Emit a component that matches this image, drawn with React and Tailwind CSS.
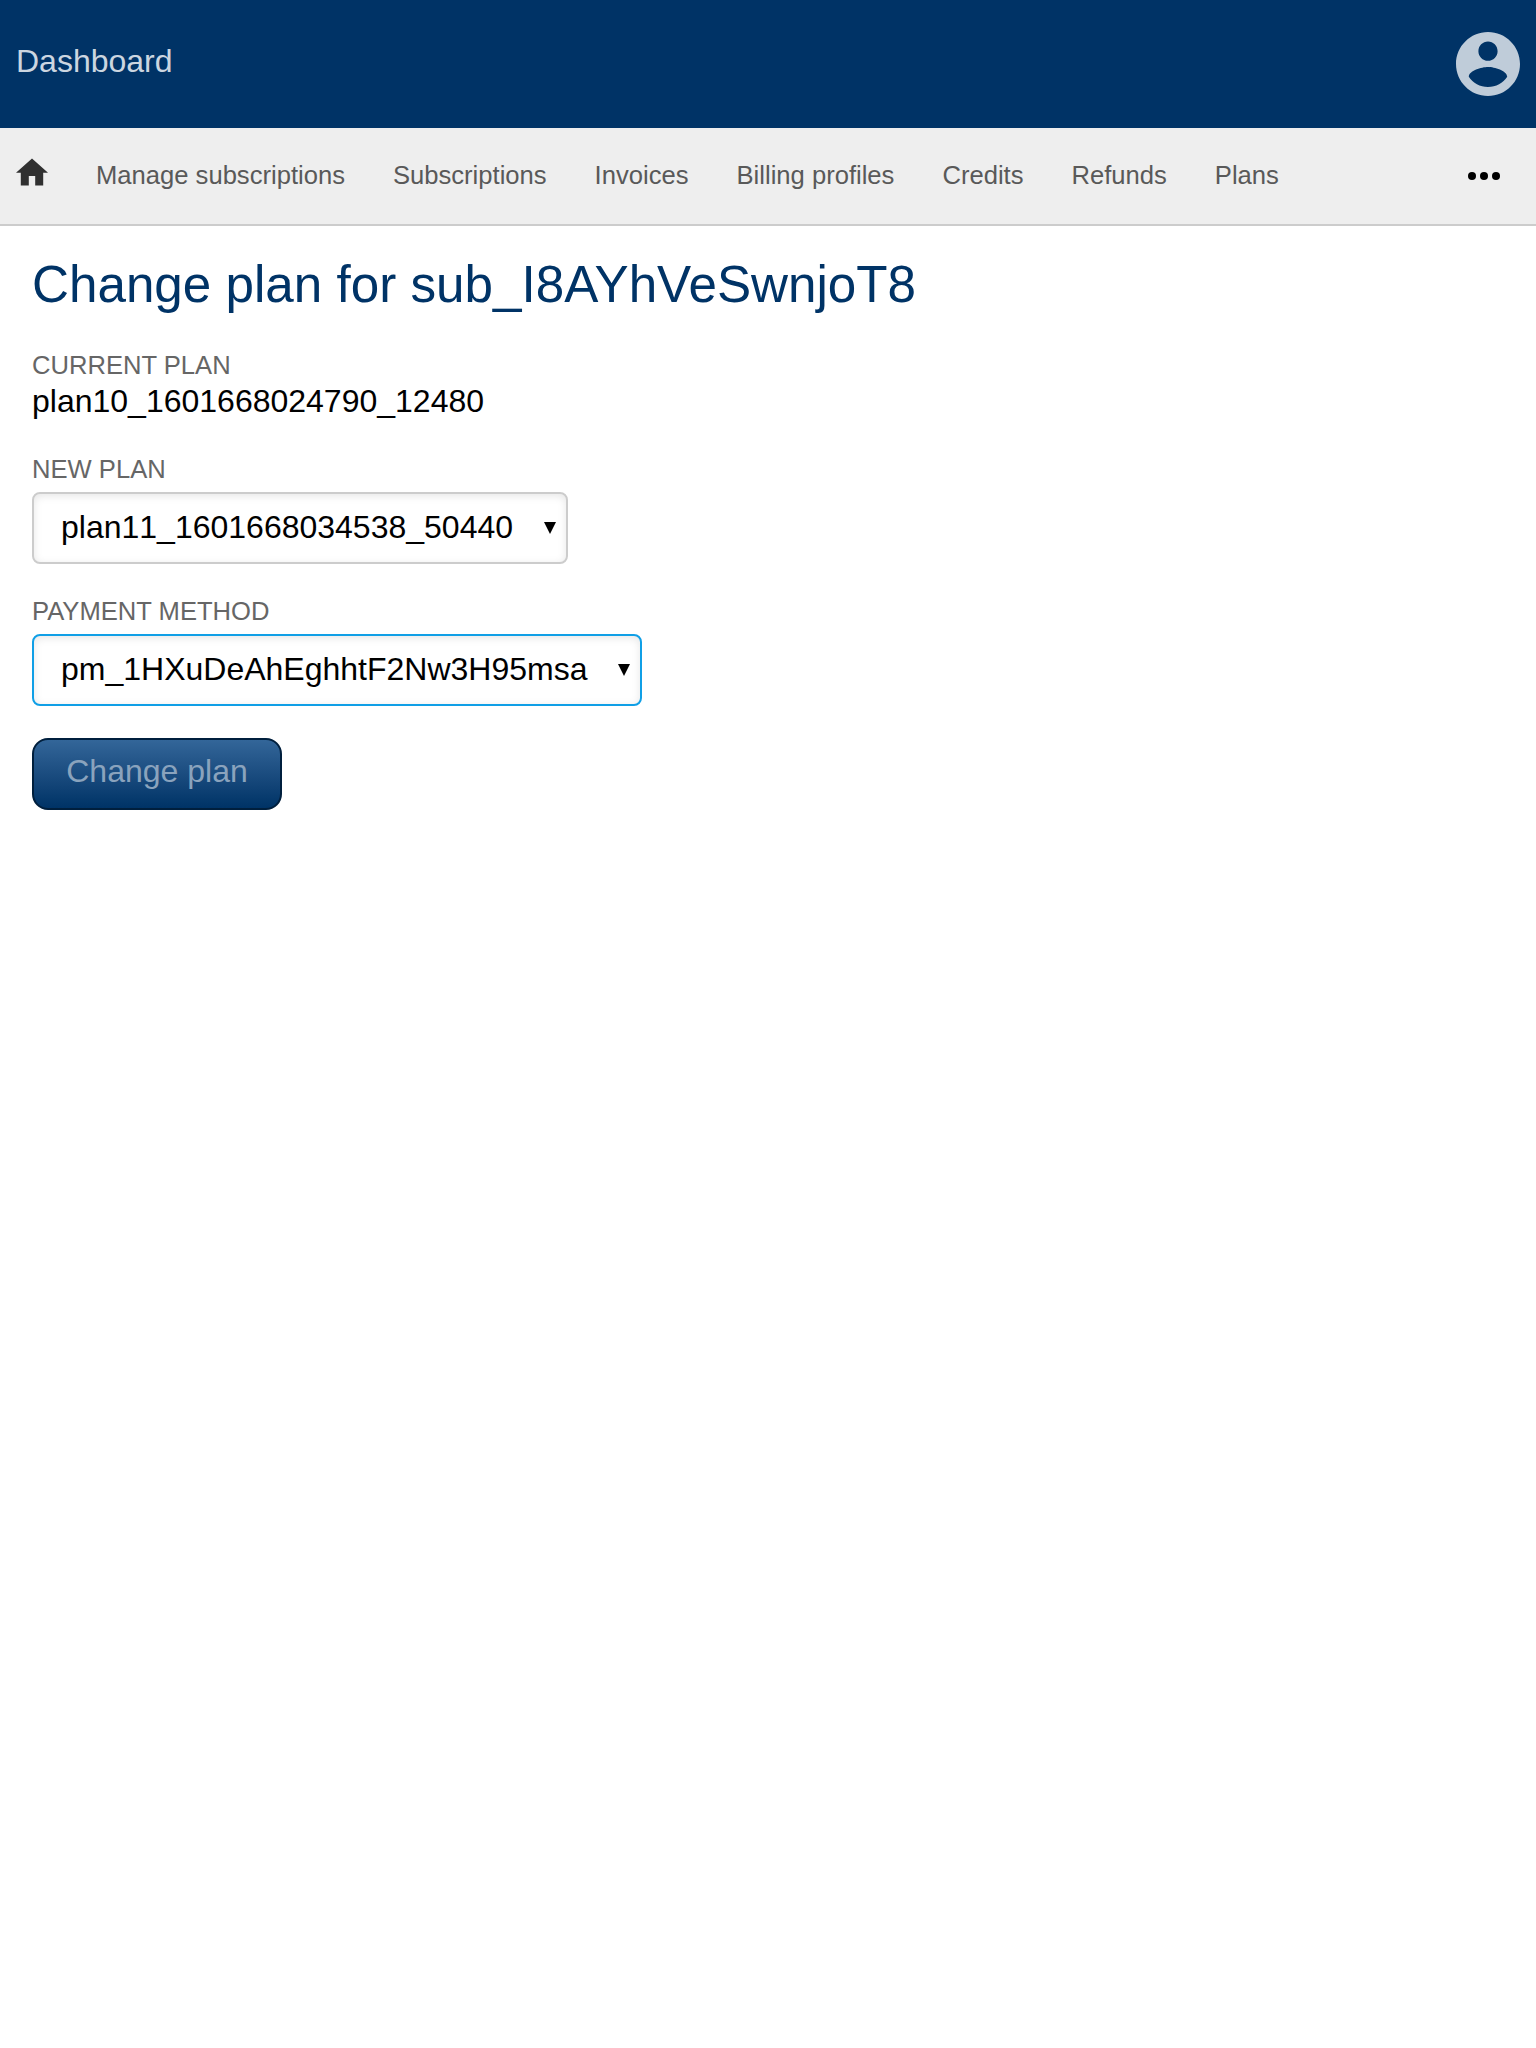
import React from "react";

const links = ["Manage subscriptions", "Subscriptions", "Invoices", "Billing profiles", "Credits", "Refunds", "Plans"];

function Label({ children }) {
  return <div className="h-[29px] text-[25.6px] leading-[29px] text-[#666666] uppercase">{children}</div>;
}

function Select({ value, className }) {
  return (
    <div
      className={
        "flex h-[72px] items-center justify-between rounded-[8px] border-2 bg-white pr-[10px] pl-[27px] shadow-[inset_0_2px_8px_rgba(0,0,0,0.1)] " +
        className
      }
    >
      <span className="mb-[2px] leading-[36px] [font-kerning:none]">{value}</span>
      <svg width="12" height="12" viewBox="0 0 12 12">
        <path d="M0 0h12L6 12z" fill="#000" />
      </svg>
    </div>
  );
}

export default function App() {
  return (
    <div className="min-h-screen bg-white font-['Liberation_Sans',Arial,sans-serif] text-[32px] leading-[36px] text-black">
      <header className="flex h-32 items-start justify-between bg-[#003366] px-4">
        <a className="mt-[43px] text-[#ccd6e0]">Dashboard</a>
        <svg className="mt-8" width="64" height="64" viewBox="2 2 20 20" fill="#bfccd9">
          <path d="M12 2C6.48 2 2 6.48 2 12s4.48 10 10 10 10-4.48 10-10S17.52 2 12 2zm0 3c1.66 0 3 1.34 3 3s-1.34 3-3 3-3-1.34-3-3 1.34-3 3-3zm0 14.2c-2.5 0-4.71-1.28-6-3.22.03-1.99 4-3.08 6-3.08 1.99 0 5.97 1.09 6 3.08-1.29 1.94-3.5 3.22-6 3.22z" />
        </svg>
      </header>
      <nav className="flex h-[98px] items-start border-b-2 border-[#cccccc] bg-[#eeeeee] pr-9 pl-4">
        <svg className="mt-[30px]" width="32" height="28" viewBox="2 2.75 20 17.5" fill="#303030">
          <path d="M10 20v-6h4v6h5v-8h3L12 3 2 12h3v8z" />
        </svg>
        <div className="mt-[33px] ml-12 flex gap-12 text-[25.6px] leading-[29px] text-[#595959]">
          {links.map((l) => (
            <a key={l}>{l}</a>
          ))}
        </div>
        <svg className="mt-11 ml-auto" width="32" height="8" viewBox="4 10 16 4">
          <circle cx="6" cy="12" r="2" />
          <circle cx="12" cy="12" r="2" />
          <circle cx="18" cy="12" r="2" />
        </svg>
      </nav>
      <main className="px-8 pt-[29px]">
        <h1 className="text-[51.2px] leading-[60px] text-[#003366]">Change plan for sub_I8AYhVeSwnjoT8</h1>
        <div className="mt-[36px]">
          <Label>Current plan</Label>
          <div className="mt-[3px]">plan10_1601668024790_12480</div>
        </div>
        <div className="mt-[36px]">
          <Label>New plan</Label>
          <Select value="plan11_1601668034538_50440" className="mt-[8px] w-[536px] border-[#cccccc]" />
        </div>
        <div className="mt-[33px]">
          <Label>Payment method</Label>
          <Select value="pm_1HXuDeAhEghhtF2Nw3H95msa" className="mt-[8px] w-[610px] border-[#109fe6]" />
        </div>
        <button className="mt-8 flex h-[72px] w-[250px] justify-center rounded-[16px] border-2 border-[#001f3d] bg-linear-to-b from-[#336699] to-[#003366] pt-[13px] leading-[36px] text-[#8aa3bd]">
          Change plan
        </button>
      </main>
    </div>
  );
}
